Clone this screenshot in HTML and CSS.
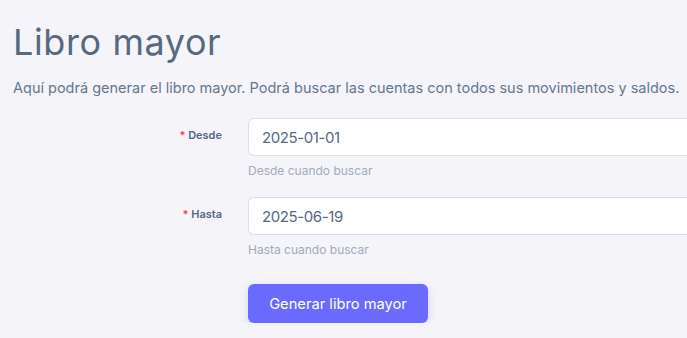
FILE: index.html
```html
<!DOCTYPE html>
<html lang="es">
<head>
<meta charset="utf-8">
<link rel="stylesheet" href="styles.css">
</head>
<body>
<div class="page">
  <h1 class="title">Libro mayor</h1>
  <p class="desc">Aquí podrá generar el libro mayor. Podrá buscar las cuentas con todos sus movimientos y saldos.</p>
  <form class="form">
    <div class="row">
      <label class="label"><span class="req">*</span> Desde</label>
      <div class="field">
        <div class="input">2025-01-01</div>
        <div class="help">Desde cuando buscar</div>
      </div>
    </div>
    <div class="row">
      <label class="label"><span class="req">*</span> Hasta</label>
      <div class="field">
        <div class="input">2025-06-19</div>
        <div class="help">Hasta cuando buscar</div>
      </div>
    </div>
    <div class="row">
      <div class="label"></div>
      <div class="field">
        <button type="button" class="btn">Generar libro mayor</button>
      </div>
    </div>
  </form>
</div>
</body>
</html>
```
FILE: styles.css
```css
html, body {
  margin: 0;
  padding: 0;
  background: #f4f4f9;
  overflow: hidden;
}
.page {
  padding: 20px 0 0 13px;
  font-family: "Inter", "Liberation Sans", sans-serif;
  color: #56697f;
}
.title {
  margin: 0;
  font-size: 36px;
  font-weight: 400;
  letter-spacing: 0.6px;
  line-height: 44px;
  color: #56697f;
}
.desc {
  margin: 14px 0 0;
  font-size: 14.5px;
  letter-spacing: 0;
  line-height: 20px;
  color: #66788d;
  white-space: nowrap;
}
.form {
  margin-top: 20px;
  display: flex;
  flex-direction: column;
}
.row {
  display: grid;
  grid-template-columns: 209px 1fr;
  column-gap: 26px;
}
.label {
  text-align: right;
  font-size: 11px;
  font-weight: 600;
  color: #56697f;
  padding-top: 10px;
  line-height: 14px;
}
.req {
  color: #e5484d;
}
.field {
  display: flex;
  flex-direction: column;
}
.input {
  height: 38px;
  box-sizing: border-box;
  width: 460px;
  background: #ffffff;
  border: 1px solid #dcdfe6;
  border-right: none;
  border-radius: 6px 0 0 6px;
  padding: 0 13px;
  display: flex;
  align-items: center;
  font-size: 15px;
  letter-spacing: -0.4px;
  color: #56697f;
}
.help {
  margin-top: 7px;
  height: 34px;
  font-size: 12px;
  line-height: 16px;
  color: #a3abb9;
}
.btn {
  margin-top: 8px;
  width: 180px;
  height: 39px;
  border: none;
  border-radius: 6px;
  background: #6a6aff;
  color: #ffffff;
  font-family: "Inter", "Liberation Sans", sans-serif;
  font-size: 14.7px;
  font-weight: 400;
  box-shadow: 0 3px 8px rgba(106, 106, 255, 0.25);
  cursor: pointer;
}
```
